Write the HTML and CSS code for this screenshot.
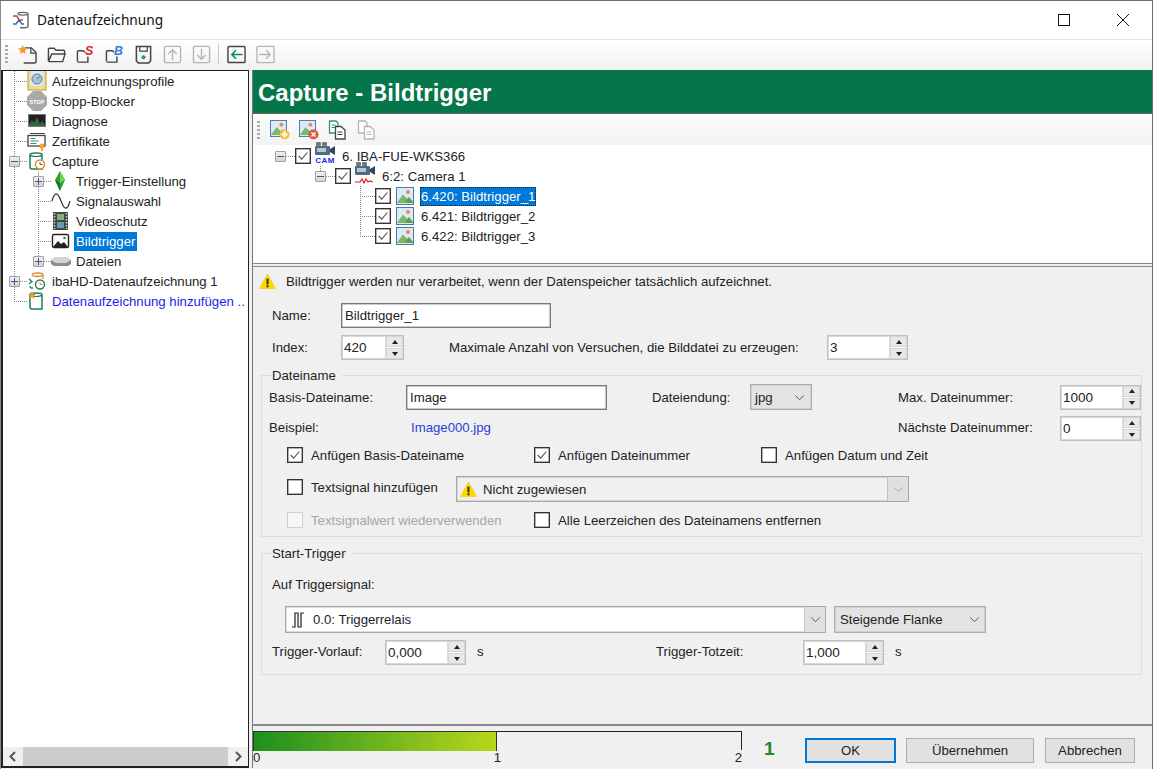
FILE: index.html
```html
<!DOCTYPE html>
<html lang="de">
<head>
    <meta charset="UTF-8">
    <title>Datenaufzeichnung</title>
    <link rel="stylesheet" href="styles.css">
</head>
<body>
<svg class="defs" width="0" height="0">
    <defs>
        <symbol id="check" viewBox="0 0 16 16"><path d="M3 8l3.500 3.500L13 4" fill="none" stroke="#555" stroke-width="1.300"/></symbol>
        <symbol id="chev" viewBox="0 0 12 8"><path d="M1 1.500l5 5 5-5" fill="none" stroke="#555" stroke-width="1.100"/></symbol>
        <symbol id="warn" viewBox="0 0 18 18"><path d="M9 1L17.500 16.500H.5z" fill="#ffd800" stroke="#f0c800" stroke-width=".6"/><rect x="8" y="6" width="2" height="6" fill="#222"/><rect x="8" y="13" width="2" height="2" fill="#222"/></symbol>
        <symbol id="pic" viewBox="0 0 18 18"><rect x=".5" y=".5" width="17" height="17" fill="#dce9f6" stroke="#4b78a8"/><circle cx="12" cy="5" r="2" fill="#ef8a4c"/><path d="M1 16l6-8 4 4 2-2 4 5v1H1z" fill="#5f9e4a"/><path d="M7 8l4 4-2 4H1z" fill="#7fb76a"/></symbol>
        <symbol id="cam" viewBox="0 0 22 14"><rect x="2" y="0" width="5" height="4" rx="1" fill="#6d7a85"/><rect x="8" y="0" width="5" height="4" rx="1" fill="#6d7a85"/><rect x="1" y="4" width="15" height="9" rx="1" fill="#4f6b80"/><rect x="3" y="6" width="9" height="4" fill="#b9c7d2"/><path d="M16 7l5-3v9l-5-3z" fill="#33485a"/></symbol>
        <symbol id="cyl" viewBox="0 0 20 20"><path d="M3 3.500C3 1.500 15 1.500 15 3.500V18H5a2 2 0 0 1-2-2z" fill="#fff" stroke="#1f7f5a" stroke-width="1.500"/><path d="M3 4c2 2 10 2 12 0" fill="none" stroke="#1f7f5a" stroke-width="1.200"/></symbol>
    </defs>
</svg>

<div class="window">
    <div class="titlebar">
        <svg class="app-icon" viewBox="0 0 18 18"><path d="M6 3C6 .8 16 .8 16 3V15.500c0 1.500-6 1.500-8 1" fill="none" stroke="#666" stroke-width="1.400"/><path d="M6 3c1.500 1.500 8.500 1.500 10 0" fill="none" stroke="#666" stroke-width="1.200"/><path d="M1 5h4l2 4h4" fill="none" stroke="#e03a3a" stroke-width="1.600"/><path d="M1 13h3l3-4 3 4h2" fill="none" stroke="#2a6fd0" stroke-width="1.600"/></svg>
        <span class="app-title">Datenaufzeichnung</span>
        <span class="win-max"></span>
        <svg class="win-close" viewBox="0 0 12 12"><path d="M0 0l12 12M12 0L0 12" stroke="#111" stroke-width="1"/></svg>
    </div>

    <div class="toolbar">
        <span class="grip"></span>
        <svg class="tool" viewBox="0 0 20 20"><path d="M7 3h7l5 5v9.500a1.500 1.500 0 0 1-1.500 1.500H6" fill="none" stroke="#444" stroke-width="1.500"/><path d="M13.500 3v5.500H19" fill="none" stroke="#444" stroke-width="1.300"/><path d="M5 0l1.500 3.500H10L7.200 6 8.200 9.500 5 7.500 1.800 9.500 2.800 6 0 3.500h3.500z" fill="#f59a23"/></svg>
        <svg class="tool" viewBox="0 0 20 20"><path d="M1.500 17V4.500a1 1 0 0 1 1-1h5l2 2h8a1 1 0 0 1 1 1V9M1.500 17.500h15l2.500-8H5l-3.500 8" fill="none" stroke="#444" stroke-width="1.500"/></svg>
        <svg class="tool" viewBox="0 0 20 20"><path d="M1.500 17V7a1 1 0 0 1 1-1h5l2 1.500M1.500 18h11v-6" fill="none" stroke="#444" stroke-width="1.500"/><text x="9.500" y="11" class="tool-letter" fill="#e0202a">S</text></svg>
        <svg class="tool" viewBox="0 0 20 20"><path d="M1.500 17V7a1 1 0 0 1 1-1h5l2 1.500M1.500 18h11v-6" fill="none" stroke="#444" stroke-width="1.500"/><text x="9.500" y="11" class="tool-letter" fill="#2a7de1">B</text></svg>
        <svg class="tool" viewBox="0 0 20 20"><path d="M2.500 1.500h15v15l-2 2.500h-11l-2-2.500z" fill="none" stroke="#444" stroke-width="1.600"/><path d="M6 1.500v5h8v-5" fill="none" stroke="#444" stroke-width="1.300"/><circle cx="10" cy="13" r="2.200" fill="#2d9b6b"/></svg>
        <svg class="tool" viewBox="0 0 20 20"><rect x="1.500" y="1.500" width="17" height="17" rx="1.500" fill="none" stroke="#b4b4b4" stroke-width="1.400"/><path d="M10 16V5M5.500 9.500L10 5l4.500 4.500" fill="none" stroke="#b4b4b4" stroke-width="1.400"/></svg>
        <svg class="tool" viewBox="0 0 20 20"><rect x="1.500" y="1.500" width="17" height="17" rx="1.500" fill="none" stroke="#b4b4b4" stroke-width="1.400"/><path d="M10 4v11M5.500 10.500L10 15l4.500-4.500" fill="none" stroke="#b4b4b4" stroke-width="1.400"/></svg>
        <span class="tool-sep"></span>
        <svg class="tool" viewBox="0 0 20 20"><rect x="1" y="1.500" width="18" height="17" rx="1" fill="none" stroke="#444" stroke-width="1.500"/><path d="M16.500 10H5M9.500 5.500L5 10l4.500 4.500" fill="none" stroke="#0c8a50" stroke-width="1.600"/></svg>
        <svg class="tool" viewBox="0 0 20 20"><rect x="1" y="1.500" width="18" height="17" rx="1" fill="none" stroke="#b4b4b4" stroke-width="1.400"/><path d="M3.500 10H15M10.500 5.500L15 10l-4.500 4.500" fill="none" stroke="#b4b4b4" stroke-width="1.400"/></svg>
    </div>

    <div class="main">
        <!-- navigation tree -->
        <div class="nav">
            <div class="nav-tree">
                <div class="row"><span class="cell branch"></span>
                    <svg class="node" viewBox="0 0 20 20"><rect x="1" y="-2" width="18" height="21" fill="#f3dc92" stroke="#b89a3a"/><rect x="3.500" y="0" width="13" height="15" fill="#dfe8ef"/><circle cx="10" cy="8" r="5" fill="#a9c4da" stroke="#5d7f9a"/><path d="M10 8l2.500-2.500" stroke="#34546e"/></svg>
                    <span class="label">Aufzeichnungsprofile</span></div>
                <div class="row"><span class="cell branch"></span>
                    <svg class="node" viewBox="0 0 20 20"><path d="M6 0h8l6 6v8l-6 6H6l-6-6V6z" fill="#a9a9a9"/><text x="10" y="12.500" class="stop-text">STOP</text></svg>
                    <span class="label">Stopp-Blocker</span></div>
                <div class="row"><span class="cell branch"></span>
                    <svg class="node" viewBox="0 0 20 20"><rect x="1.500" y="3.500" width="17" height="12" fill="#222" stroke="#777"/><path d="M2 14l3-5 2 3 3-6 3 7 2-3 3 4v1H2z" fill="#2f6b3a"/></svg>
                    <span class="label">Diagnose</span></div>
                <div class="row"><span class="cell branch"></span>
                    <svg class="node" viewBox="0 0 20 20"><path d="M3 2.500h15" stroke="#444"/><rect x="1" y="4.500" width="17" height="10.500" fill="#fff" stroke="#444" stroke-width="1.300"/><path d="M3.500 7.500h5M3.500 10h8M3.500 12.500h6" stroke="#2d9b6b"/><circle cx="15" cy="15" r="2.500" fill="#f5a623"/><path d="M14 17h2v3h-2z" fill="#f5a623"/></svg>
                    <span class="label">Zertifikate</span></div>
                <div class="row"><span class="cell tee"><span class="exp"><i class="bar"></i></span></span>
                    <svg class="node" viewBox="0 0 20 20"><use href="#cyl"/><circle cx="13" cy="13.500" r="4.500" fill="#fff" stroke="#e08a2a" stroke-width="1.400"/><path d="M13 11v2.500h2.500" fill="none" stroke="#1f7f5a"/></svg>
                    <span class="label">Capture</span></div>
                <div class="row"><span class="cell line"></span><span class="cell tee"><span class="exp"><i class="bar"></i><i class="pole"></i></span></span>
                    <svg class="node" viewBox="0 0 20 20"><path d="M9 0l5 9-5 11-5-11z" fill="#2e9e3a"/><path d="M9 0l5 9-5 3z" fill="#7ad04f"/><path d="M9 12v8L4 9z" fill="#13752a"/></svg>
                    <span class="label">Trigger-Einstellung</span></div>
                <div class="row"><span class="cell line"></span><span class="cell tee"></span>
                    <svg class="node" viewBox="0 0 20 20"><path d="M1 10C4-1 7 2 10 10s6 11 9 0" fill="none" stroke="#333" stroke-width="1.200"/></svg>
                    <span class="label">Signalauswahl</span></div>
                <div class="row"><span class="cell line"></span><span class="cell tee"></span>
                    <svg class="node" viewBox="0 0 20 20"><rect x="2" y="1" width="15" height="18" fill="#3d4a42"/><rect x="6" y="3" width="7" height="6" fill="#86b07e"/><rect x="6" y="11" width="7" height="6" fill="#6d9ab2"/><path d="M3.500 2v16M15.500 2v16" stroke="#cfd6cf" stroke-dasharray="1.500 1.500" stroke-width="1.500"/></svg>
                    <span class="label">Videoschutz</span></div>
                <div class="row"><span class="cell line"></span><span class="cell tee"></span>
                    <svg class="node" viewBox="0 0 20 20"><rect x="1.500" y="3.500" width="16" height="13" rx="1.500" fill="#fff" stroke="#222" stroke-width="1.400"/><path d="M2 16l5-6 3 3 3-2 4 5z" fill="#222"/><circle cx="13.500" cy="7" r="1.300" fill="#666"/></svg>
                    <span class="label selected">Bildtrigger</span></div>
                <div class="row"><span class="cell line"></span><span class="cell elbow"><span class="exp"><i class="bar"></i><i class="pole"></i></span></span>
                    <svg class="node" viewBox="0 0 20 20"><path d="M0 9l5-3h10l5 3v4l-3 2H3l-3-2z" fill="#8d8d8d"/><path d="M0 9l5-3h10l5 3-5 3H5z" fill="#d5d5d5"/></svg>
                    <span class="label">Dateien</span></div>
                <div class="row"><span class="cell tee"><span class="exp"><i class="bar"></i><i class="pole"></i></span></span>
                    <svg class="node" viewBox="0 0 20 20"><path d="M5 3.500C5 1.500 16 1.500 16 3.500V8M5 4c2 2 9 2 11 0" fill="#fff" stroke="#e08a2a" stroke-width="1.300"/><path d="M2 8l3 2.500L2 13M6 17H4a2 2 0 0 1-1-2" fill="none" stroke="#1f7f5a" stroke-width="1.300"/><circle cx="13" cy="13.500" r="4.500" fill="#fff" stroke="#1f7f5a" stroke-width="1.400"/><path d="M13 11v2.500h2.500" fill="none" stroke="#e08a2a"/></svg>
                    <span class="label">ibaHD-Datenaufzeichnung 1</span></div>
                <div class="row"><span class="cell elbow"></span>
                    <svg class="node" viewBox="0 0 20 20"><use href="#cyl"/><path d="M5 0l1.200 3H9L6.800 5 7.600 8 5 6.300 2.400 8 3.200 5 1 3h2.800z" fill="#f59a23"/></svg>
                    <span class="label link-blue">Datenaufzeichnung hinzufügen ..</span></div>
            </div>
            <div class="hscroll">
                <svg class="sb-arrow" viewBox="0 0 20 19"><path d="M12 5L7.500 9.500 12 14" fill="none" stroke="#555" stroke-width="2"/></svg>
                <span class="sb-thumb"></span>
                <svg class="sb-arrow" viewBox="0 0 20 19"><path d="M8 5l4.500 4.500L8 14" fill="none" stroke="#555" stroke-width="2"/></svg>
            </div>
        </div>

        <div class="detail">
            <div class="head">Capture - Bildtrigger</div>

            <div class="subtools">
                <span class="grip"></span>
                <svg class="tool2" viewBox="0 0 20 20"><use href="#pic" width="17" height="17"/><circle cx="14.500" cy="14.500" r="5" fill="#f4c430"/><path d="M14.500 11.500v6M11.500 14.500h6" stroke="#fff" stroke-width="2"/></svg>
                <svg class="tool2" viewBox="0 0 20 20"><use href="#pic" width="17" height="17"/><circle cx="14.500" cy="14.500" r="5" fill="#e2563b"/><path d="M12.500 12.500l4 4M16.500 12.500l-4 4" stroke="#fff" stroke-width="1.600"/></svg>
                <svg class="tool2" viewBox="0 0 20 20"><path d="M1.500 1H8l2 2v10H1.500z" fill="#fff" stroke="#2a9a62" stroke-width="1.300"/><path d="M3.500 5h4M3.500 7.500h4" stroke="#2a9a62"/><path d="M7.500 6.500H13l4 3.500v9H7.500z" fill="#fff" stroke="#444" stroke-width="1.300"/><path d="M9.500 12h5M9.500 14.500h5" stroke="#444"/></svg>
                <svg class="tool2" viewBox="0 0 20 20"><path d="M1.500 1H8l2 2v10H1.500z" fill="#fff" stroke="#b4b4b4" stroke-width="1.300"/><path d="M7.500 6.500H13l4 3.500v9H7.500z" fill="#fff" stroke="#b4b4b4" stroke-width="1.300"/><path d="M9.500 12h5M9.500 14.500h5" stroke="#b4b4b4"/></svg>
            </div>

            <div class="signal-tree">
                <div class="srow">
                    <span class="scell stub"><span class="exp"><i class="bar"></i></span></span>
                    <span class="cb"><svg viewBox="0 0 16 16"><use href="#check"/></svg></span>
                    <span class="cam-box"><svg class="cam" viewBox="0 0 22 14"><use href="#cam"/></svg><span class="cam-tag">CAM</span></span>
                    <span class="slabel">6. IBA-FUE-WKS366</span>
                </div>
                <div class="srow lvl1">
                    <span class="scell stub up"><span class="exp"><i class="bar"></i></span></span>
                    <span class="cb"><svg viewBox="0 0 16 16"><use href="#check"/></svg></span>
                    <span class="cam-box"><svg class="cam" viewBox="0 0 22 14"><use href="#cam"/></svg><svg class="cam-sig" viewBox="0 0 20 6"><path d="M0 4h5l2-3 2 4 2-4 2 3 2-1 3 1" fill="none" stroke="#e01f1f" stroke-width="1.200"/></svg></span>
                    <span class="slabel">6:2: Camera 1</span>
                </div>
                <div class="srow lvl2">
                    <span class="scell tee"></span>
                    <span class="cb"><svg viewBox="0 0 16 16"><use href="#check"/></svg></span>
                    <svg class="pic" viewBox="0 0 18 18"><use href="#pic"/></svg>
                    <span class="slabel current">6.420: Bildtrigger_1</span>
                </div>
                <div class="srow lvl2">
                    <span class="scell tee"></span>
                    <span class="cb"><svg viewBox="0 0 16 16"><use href="#check"/></svg></span>
                    <svg class="pic" viewBox="0 0 18 18"><use href="#pic"/></svg>
                    <span class="slabel">6.421: Bildtrigger_2</span>
                </div>
                <div class="srow lvl2">
                    <span class="scell elbow"></span>
                    <span class="cb"><svg viewBox="0 0 16 16"><use href="#check"/></svg></span>
                    <svg class="pic" viewBox="0 0 18 18"><use href="#pic"/></svg>
                    <span class="slabel">6.422: Bildtrigger_3</span>
                </div>
            </div>

            <div class="splitter"></div>

            <div class="form">
                <div class="warn-row">
                    <svg class="warn" viewBox="0 0 18 18"><use href="#warn"/></svg>
                    <span>Bildtrigger werden nur verarbeitet, wenn der Datenspeicher tatsächlich aufzeichnet.</span>
                </div>

                <div class="name-row">
                    <span>Name:</span>
                    <input class="text" value="Bildtrigger_1">
                </div>
                <div class="index-row">
                    <span>Index:</span>
                    <div class="spin narrow"><span class="val">420</span><span class="arrows"><i class="up"></i><i class="dn"></i></span></div>
                    <span>Maximale Anzahl von Versuchen, die Bilddatei zu erzeugen:</span>
                    <div class="spin"><span class="val">3</span><span class="arrows"><i class="up"></i><i class="dn"></i></span></div>
                </div>

                <div class="group first">
                    <div class="legend">Dateiname</div>
                    <div class="file-row">
                        <span>Basis-Dateiname:</span>
                        <input class="text base" value="Image">
                        <span>Dateiendung:</span>
                        <div class="select jpg"><span>jpg</span><svg class="chev" viewBox="0 0 12 8"><use href="#chev"/></svg></div>
                        <span>Max. Dateinummer:</span>
                        <div class="spin"><span class="val">1000</span><span class="arrows"><i class="up"></i><i class="dn"></i></span></div>
                    </div>
                    <div class="file-row second">
                        <span class="raise">Beispiel:</span>
                        <span class="link-blue sample raise">Image000.jpg</span>
                        <span></span>
                        <span></span>
                        <span class="raise">Nächste Dateinummer:</span>
                        <div class="spin"><span class="val">0</span><span class="arrows"><i class="up"></i><i class="dn"></i></span></div>
                    </div>
                    <div class="check-row three">
                        <label><span class="cb"><svg viewBox="0 0 16 16"><use href="#check"/></svg></span>Anfügen Basis-Dateiname</label>
                        <label><span class="cb"><svg viewBox="0 0 16 16"><use href="#check"/></svg></span>Anfügen Dateinummer</label>
                        <label><span class="cb"></span>Anfügen Datum und Zeit</label>
                    </div>
                    <div class="check-row textsignal">
                        <label class="lift"><span class="cb"></span>Textsignal hinzufügen</label>
                        <div class="combo off">
                            <svg class="warn" viewBox="0 0 18 18"><use href="#warn"/></svg>
                            <span class="combo-text">Nicht zugewiesen</span>
                            <span class="combo-btn"><svg class="chev" viewBox="0 0 12 8"><use href="#chev"/></svg></span>
                        </div>
                    </div>
                    <div class="check-row last">
                        <label class="dis"><span class="cb"></span>Textsignalwert wiederverwenden</label>
                        <label><span class="cb"></span>Alle Leerzeichen des Dateinamens entfernen</label>
                    </div>
                </div>

                <div class="group second-group">
                    <div class="legend">Start-Trigger</div>
                    <div class="auf">Auf Triggersignal:</div>
                    <div class="signal-row">
                        <div class="combo on">
                            <svg class="pulse" viewBox="0 0 14 16"><path d="M1 15h3V1h3v14h3V1h3" fill="none" stroke="#222" stroke-width="1.200"/></svg>
                            <span class="combo-text">0.0: Triggerrelais</span>
                            <span class="combo-btn"><svg class="chev" viewBox="0 0 12 8"><use href="#chev"/></svg></span>
                        </div>
                        <div class="select flank"><span>Steigende Flanke</span><svg class="chev" viewBox="0 0 12 8"><use href="#chev"/></svg></div>
                    </div>
                    <div class="time-row">
                        <span class="raise">Trigger-Vorlauf:</span>
                        <div class="spin"><span class="val">0,000</span><span class="arrows"><i class="up"></i><i class="dn"></i></span></div>
                        <span class="raise">s</span>
                        <span class="raise">Trigger-Totzeit:</span>
                        <div class="spin"><span class="val">1,000</span><span class="arrows"><i class="up"></i><i class="dn"></i></span></div>
                        <span class="raise">s</span>
                    </div>
                </div>
            </div>

            <div class="footer">
                <div class="gauge">
                    <div class="track"><span class="fill"></span><span class="rest"></span></div>
                    <div class="ticks"><span>0</span><span>1</span><span>2</span></div>
                </div>
                <span class="count">1</span>
                <button class="btn ok">OK</button>
                <button class="btn apply">Übernehmen</button>
                <button class="btn cancel">Abbrechen</button>
            </div>
        </div>
    </div>
</div>
</body>
</html>
```
FILE: styles.css
```css
* {
    margin: 0;
    padding: 0;
    box-sizing: border-box;
}

body {
    width: 1153px;
    height: 770px;
    overflow: hidden;
    background: #fff;
    font-family: "Liberation Sans", Arial, sans-serif;
    font-size: 13.2px;
    color: #222;
}

.defs {
    display: block;
    height: 0;
}

svg {
    display: block;
    flex: none;
}

.window {
    width: 1153px;
    height: 769px;
    display: flex;
    flex-direction: column;
    background: #f0f0f0;
    border-top: 1px solid #6d6d6d;
    border-left: 1px solid #8a8a8a;
    border-right: 1px solid #6d6d6d;
}

/* title bar */
.titlebar {
    height: 39px;
    flex: none;
    display: flex;
    align-items: center;
    padding: 0 0 1px 11px;
    background: #fff;
    border-bottom: 1px solid #e2e2e2;
}

.app-icon {
    width: 18px;
    height: 18px;
}

.app-title {
    margin-left: 7px;
    font-family: "Noto Sans", sans-serif;
    font-size: 13.7px;
    color: #111;
}

.win-max {
    width: 12px;
    height: 12px;
    margin-left: auto;
    border: 1px solid #111;
}

.win-close {
    width: 12px;
    height: 12px;
    margin: 0 23px 0 47px;
}

/* toolbars */
.toolbar {
    height: 30px;
    flex: none;
    display: flex;
    align-items: center;
    gap: 10px;
    padding: 0 0 2px 4px;
    background: linear-gradient(#fff, #f1f1f1);
}

.grip {
    width: 3px;
    height: 18px;
    background: repeating-linear-gradient(#aaa 0 2px, transparent 2px 4px);
}

.tool {
    width: 19px;
    height: 19px;
}

.tool-letter {
    font: italic bold 13px "Liberation Sans", sans-serif;
}

.stop-text {
    font: bold 5.500px "Liberation Sans", sans-serif;
    fill: #fff;
    text-anchor: middle;
}

.tool-sep {
    width: 1px;
    height: 20px;
    margin: 0 -2px 0 -3px;
    background: #c8c8c8;
}

.main {
    flex: 1;
    min-height: 0;
    display: flex;
    gap: 3px;
    padding-bottom: 1px;
}

/* left tree */
.nav {
    width: 248px;
    flex: none;
    display: flex;
    flex-direction: column;
    background: #fff;
    border: 1px solid #222;
    border-left-width: 2px;
    border-bottom-width: 2px;
}

.nav-tree {
    flex: 1;
    padding-left: 1px;
}

.row {
    height: 20px;
    display: flex;
    align-items: center;
}

.cell {
    width: 24px;
    height: 20px;
    flex: none;
    display: flex;
    align-items: center;
}

.line,
.tee,
.elbow,
.scell {
    background-repeat: no-repeat;
}

.line {
    background-image: repeating-linear-gradient(#888 0 1px, transparent 1px 2px);
    background-size: 1px 100%;
    background-position: 10px 0;
}

.tee {
    background-image: repeating-linear-gradient(#888 0 1px, transparent 1px 2px), repeating-linear-gradient(90deg, #888 0 1px, transparent 1px 2px);
    background-size: 1px 100%, 13px 1px;
    background-position: 10px 0, 10px 10px;
}

.elbow {
    background-image: repeating-linear-gradient(#888 0 1px, transparent 1px 2px), repeating-linear-gradient(90deg, #888 0 1px, transparent 1px 2px);
    background-size: 1px 11px, 13px 1px;
    background-position: 10px 0, 10px 10px;
}

.branch {
    background: repeating-linear-gradient(#888 0 1px, transparent 1px 2px) 10px 0 / 1px 100% no-repeat,
        repeating-linear-gradient(90deg, #888 0 1px, transparent 1px 2px) 10px 10px / 13px 1px no-repeat;
}

.exp {
    width: 11px;
    height: 11px;
    margin-left: 5px;
    display: flex;
    align-items: center;
    justify-content: center;
    background: linear-gradient(#f0f0f0, #d4d4d4);
    border: 1px solid #a0a0a0;
    border-radius: 1px;
}

.exp .bar {
    width: 7px;
    height: 1px;
    background: #3c5a96;
}

.exp .pole {
    width: 1px;
    height: 7px;
    margin-left: -4px;
    margin-right: 3px;
    background: #3c5a96;
}

.node {
    width: 20px;
    height: 20px;
    margin: 0 3px 0 -1px;
}

.label {
    height: 19px;
    padding: 0 2px;
    line-height: 19px;
    white-space: nowrap;
}

.selected {
    background: #0078d7;
    color: #fff;
}

.link-blue {
    color: #1c1cf0;
}

.sample {
    color: #2a3fd8;
    padding-left: 5px;
}

.hscroll {
    height: 19px;
    flex: none;
    display: flex;
    background: #f0f0f0;
}

.sb-arrow {
    width: 20px;
    height: 19px;
}

.sb-thumb {
    flex: 1;
    background: #cdcdcd;
}

/* right side */
.detail {
    flex: 1;
    min-width: 0;
    display: flex;
    flex-direction: column;
    border-left: 1px solid #777;
}

.head {
    height: 44px;
    flex: none;
    padding-left: 5px;
    background: #05754a;
    border-bottom: 1px solid #666;
    color: #fff;
    font-size: 24px;
    font-weight: bold;
    line-height: 45px;
}

.subtools {
    height: 31px;
    flex: none;
    display: flex;
    align-items: center;
    gap: 9px;
    padding: 1px 0 0 4px;
    background: linear-gradient(#fcfcfc, #f3f3f3);
}

.subtools .grip {
    margin-right: 1px;
}

.tool2 {
    width: 20px;
    height: 20px;
}

.signal-tree {
    height: 118px;
    flex: none;
    padding: 1px 0 0 17px;
    background: #fff;
}

.srow {
    height: 20px;
    display: flex;
    align-items: center;
}

.lvl1 {
    margin-left: 40px;
}

.lvl2 {
    margin-left: 80px;
}

.scell {
    width: 25px;
    height: 20px;
    flex: none;
    display: flex;
    align-items: center;
}

.stub {
    background: repeating-linear-gradient(90deg, #888 0 1px, transparent 1px 2px) 10px 10px / 15px 1px no-repeat;
}

.stub.up {
    background: repeating-linear-gradient(90deg, #888 0 1px, transparent 1px 2px) 10px 10px / 15px 1px no-repeat,
        repeating-linear-gradient(#888 0 1px, transparent 1px 2px) 10px 0 / 1px 6px no-repeat;
}

.signal-tree .tee {
    background-size: 1px 100%, 15px 1px;
}

.signal-tree .elbow {
    background-size: 1px 11px, 15px 1px;
}

.cb {
    width: 16px;
    height: 16px;
    flex: none;
    display: inline-block;
    background: #fff;
    border: 1px solid #333;
    box-shadow: inset 0 0 0 .5px #666;
}

.cb svg {
    width: 14px;
    height: 14px;
}

.cam-box {
    width: 22px;
    height: 20px;
    margin: 0 5px 0 3px;
    display: flex;
    flex-direction: column;
    align-items: center;
    flex: none;
}

.cam {
    width: 22px;
    height: 14px;
    margin-top: -4px;
}

.cam-tag {
    font-size: 8px;
    line-height: 9px;
    font-weight: bold;
    letter-spacing: .4px;
    color: #1c1cf0;
}

.cam-sig {
    width: 20px;
    height: 6px;
    margin-top: 2px;
}

.slabel {
    height: 19px;
    padding: 0 1px;
    line-height: 19px;
    white-space: nowrap;
}

.pic {
    width: 18px;
    height: 18px;
    margin: 0 6px 0 5px;
}

.current {
    background: #0078d7;
    color: #fff;
    outline: 1px dotted #123;
    outline-offset: -1px;
}

.splitter {
    height: 4px;
    flex: none;
    background: #f0f0f0;
    border-top: 1px solid #8a8a8a;
    border-bottom: 1px solid #8a8a8a;
}

/* form */
.form {
    flex: 1;
    min-height: 0;
    background: #f0f0f0;
    border-bottom: 2px solid #8a8a8a;
}

.warn-row {
    height: 20px;
    margin-top: 4px;
    padding-left: 6px;
    display: flex;
    align-items: center;
    gap: 10px;
}

.warn {
    width: 17px;
    height: 17px;
}

.name-row,
.index-row {
    height: 25px;
    padding-left: 19px;
    display: grid;
    align-items: center;
}

.name-row {
    margin-top: 12px;
    grid-template-columns: 69px 210px;
}

.index-row {
    margin-top: 7px;
    grid-template-columns: 69px 108px 378px 81px;
}

.text {
    height: 25px;
    padding: 0 3px;
    border: 1px solid #7a7a7a;
    background: #fff;
    font: inherit;
    color: #222;
    box-shadow: inset 0 0 0 .5px #999;
    outline: none;
}

.spin {
    width: 81px;
    height: 25px;
    display: flex;
    align-items: center;
    padding-left: 2px;
    background: #fff;
    border: 1px solid #c0c0c0;
    box-shadow: inset 0 0 0 1px #d8d8d8;
}

.spin.narrow {
    width: 63px;
}

.val {
    flex: 1;
    font-size: 13.5px;
    white-space: nowrap;
}

.arrows {
    width: 18px;
    height: 23px;
    flex: none;
    display: flex;
    flex-direction: column;
    gap: 1px;
    background: #fff;
    border-left: 1px solid #ddd;
}

.arrows i {
    flex: 1;
    display: flex;
    align-items: center;
    justify-content: center;
    background: #e8e8e8;
    border: 1px solid #d4d4d4;
}

.arrows i::after {
    content: "";
    border-left: 3.500px solid transparent;
    border-right: 3.500px solid transparent;
}

.arrows .up::after {
    border-bottom: 4px solid #222;
}

.arrows .dn::after {
    border-top: 4px solid #222;
}

.group {
    width: 881px;
    margin-left: 8px;
    background: #f0f0f0;
    border: 1px solid #dcdcdc;
}

.group.first {
    margin-top: 15px;
    padding: 0 0 6px 7px;
    height: 162px;
}

.group.second-group {
    margin-top: 16px;
    padding-left: 10px;
    height: 122px;
}

.legend {
    width: fit-content;
    height: 16px;
    margin: -8px 0 0 3px;
    padding-right: 6px;
    background: #f0f0f0;
    line-height: 16px;
}

.second-group .legend {
    margin-left: 0;
}

.file-row {
    display: grid;
    grid-template-columns: 137px 246px 98px 148px 162px 81px;
    align-items: center;
    height: 26px;
}

.file-row .text.base {
    width: 201px;
}

.file-row.second {
    height: 25px;
    margin-top: 6px;
}

.raise {
    margin-bottom: 3px;
}

.check-row {
    display: grid;
    align-items: center;
    padding-left: 18px;
}

.check-row label {
    display: flex;
    align-items: center;
    gap: 8px;
    white-space: nowrap;
}

.three {
    height: 20px;
    margin-top: 4px;
    grid-template-columns: 247px 227px 1fr;
}

.textsignal {
    height: 26px;
    margin-top: 11px;
    grid-template-columns: 169px 453px;
}

.lift {
    margin-bottom: 4px;
}

.last {
    height: 20px;
    margin-top: 8px;
    grid-template-columns: 247px 1fr;
}

.dis {
    color: #a6a6a6;
}

.dis .cb {
    border-color: #cfcfcf;
    box-shadow: none;
    background: #f6f6f6;
}

.select {
    display: flex;
    align-items: center;
    justify-content: space-between;
    background: #e3e3e3;
    border: 1px solid #adadad;
    box-shadow: inset 0 0 0 .5px #bdbdbd;
}

.select.jpg {
    width: 62px;
    height: 26px;
    padding: 0 6px 0 4px;
}

.select.flank {
    width: 152px;
    height: 27px;
    padding: 0 5px;
}

.chev {
    width: 11px;
    height: 7px;
}

.combo {
    display: flex;
    align-items: center;
    height: 26px;
    border: 1px solid #a8a8a8;
    box-shadow: inset 0 0 0 .5px #bbb;
}

.combo.off {
    padding-left: 3px;
    background: #f0f0f0;
}

.combo.off .combo-text {
    margin-left: 6px;
}

.combo-btn {
    width: 21px;
    height: 100%;
    margin-left: auto;
    display: flex;
    align-items: center;
    justify-content: center;
    background: #e0e0e0;
    border-left: 1px solid #c4c4c4;
}

.combo.off .chev {
    opacity: .4;
}

.combo.on {
    width: 541px;
    height: 27px;
    padding-left: 5px;
    background: #fff;
}

.combo.on .combo-text {
    margin-left: 8px;
}

.pulse {
    width: 14px;
    height: 16px;
}

.auf {
    height: 20px;
    margin-top: 13px;
    line-height: 20px;
}

.signal-row {
    height: 27px;
    margin: 11px 0 0 13px;
    display: flex;
    gap: 8px;
}

.time-row {
    height: 25px;
    margin-top: 7px;
    display: grid;
    grid-template-columns: 113px 92px 179px 147px 92px 1fr;
    align-items: center;
}

/* footer */
.footer {
    height: 42px;
    flex: none;
    display: flex;
    align-items: flex-start;
    background: #f0f0f0;
}

.gauge {
    width: 489px;
    margin-top: 5px;
    flex: none;
}

.track {
    height: 20px;
    display: flex;
}

.fill {
    width: 244px;
    background: linear-gradient(90deg, #1d8f1f, #b9d71c);
    border: 1px solid #333;
    border-width: 1px 1px 0;
}

.rest {
    flex: 1;
    height: 19px;
    border-top: 1px solid #222;
    border-right: 1px solid #222;
}

.ticks {
    height: 14px;
    display: flex;
    justify-content: space-between;
    line-height: 14px;
}

.count {
    width: 41px;
    margin: 12px 0 0 22px;
    font-size: 19px;
    font-weight: bold;
    line-height: 22px;
    color: #1a8a2b;
}

.btn {
    height: 25px;
    margin-top: 12px;
    background: #e1e1e1;
    border: 1px solid #adadad;
    font: inherit;
    color: #222;
}

.ok {
    width: 91px;
    border: 2px solid #0078d7;
}

.apply {
    width: 128px;
    margin-left: 10px;
}

.cancel {
    width: 90px;
    margin-left: 11px;
}
```
